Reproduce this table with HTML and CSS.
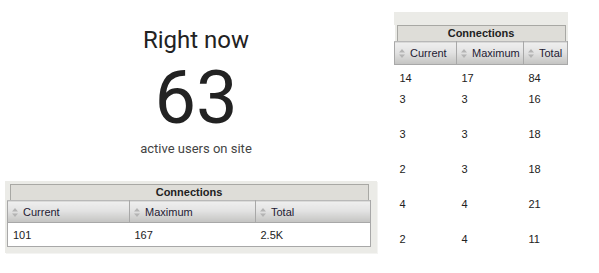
FILE: index.html
```html
<!DOCTYPE html>
<html lang="en">
<head>
    <meta charset="UTF-8">
    <meta name="viewport" content="width=device-width, initial-scale=1.0">
    <title>Realtime</title>
    <link rel="stylesheet" href="styles.css">
</head>
<body>
    <div class="dashboard">
        <div class="col-left">
            <div class="now">
                <h1>Right now</h1>
                <div class="now-count">63</div>
                <div class="now-label">active users on site</div>
            </div>

            <div class="grid-wrap grid-site">
                <table class="grid">
                    <colgroup>
                        <col style="width: 122px">
                        <col style="width: 126px">
                        <col>
                    </colgroup>
                    <thead>
                        <tr><th class="group" colspan="3"><div>Connections</div></th></tr>
                        <tr>
                            <th class="sort"><svg viewBox="0 0 6 9"><path d="M3 0L6 3.5H0Z M3 9L0 5.5H6Z"/></svg>Current</th>
                            <th class="sort"><svg viewBox="0 0 6 9"><path d="M3 0L6 3.5H0Z M3 9L0 5.5H6Z"/></svg>Maximum</th>
                            <th class="sort"><svg viewBox="0 0 6 9"><path d="M3 0L6 3.5H0Z M3 9L0 5.5H6Z"/></svg>Total</th>
                        </tr>
                    </thead>
                    <tbody>
                        <tr><td>101</td><td>167</td><td>2.5K</td></tr>
                    </tbody>
                </table>
            </div>
        </div>

        <div class="col-right">
            <div class="grid-wrap grid-pages">
                <table class="grid">
                    <colgroup>
                        <col style="width: 62px">
                        <col style="width: 67px">
                        <col>
                    </colgroup>
                    <thead>
                        <tr><th class="group" colspan="3"><div>Connections</div></th></tr>
                        <tr>
                            <th class="sort"><svg viewBox="0 0 6 9"><path d="M3 0L6 3.5H0Z M3 9L0 5.5H6Z"/></svg>Current</th>
                            <th class="sort"><svg viewBox="0 0 6 9"><path d="M3 0L6 3.5H0Z M3 9L0 5.5H6Z"/></svg>Maximum</th>
                            <th class="sort"><svg viewBox="0 0 6 9"><path d="M3 0L6 3.5H0Z M3 9L0 5.5H6Z"/></svg>Total</th>
                        </tr>
                    </thead>
                    <tbody>
                        <tr class="first"><td>14</td><td>17</td><td>84</td></tr>
                        <tr><td>3</td><td>3</td><td>16</td></tr>
                        <tr><td>3</td><td>3</td><td>18</td></tr>
                        <tr><td>2</td><td>3</td><td>18</td></tr>
                        <tr><td>4</td><td>4</td><td>21</td></tr>
                        <tr><td>2</td><td>4</td><td>11</td></tr>
                    </tbody>
                </table>
            </div>
        </div>
    </div>
</body>
</html>
```

FILE: styles.css
```css
body {
    margin: 0;
    padding: 0;
    background-color: #fff;
    font-family: "Liberation Sans", Arial, sans-serif;
    color: #222;
}
.dashboard {
    display: flex;
    align-items: flex-start;
}
.col-left {
    width: 392px;
}
.col-right {
    padding-left: 2px;
    padding-top: 12px;
}

/* big "right now" counter */
.now {
    font-family: Roboto, "Noto Sans", sans-serif;
    text-align: center;
    padding-top: 26px;
}
.now h1 {
    margin: 0;
    font-size: 24px;
    line-height: 28px;
    font-weight: 400;
    color: #222;
}
.now-count {
    margin-top: 7px;
    font-size: 74px;
    line-height: 74px;
    color: #222;
}
.now-label {
    margin-top: 6px;
    font-size: 13px;
    line-height: 16px;
    color: #444;
}

/* tablesorter-like grids */
.grid-site {
    width: 364px;
    margin: 24px 0 0 5px;
    padding: 3px 6px 6px 2px;
    background-color: #ebebe7;
    box-shadow: 1px 1px 0 #f4f4f2;
}
.grid-pages {
    width: 174px;
    border-top: 13px solid #ebebe7;
}
.grid {
    width: 100%;
    table-layout: fixed;
    border-collapse: collapse;
    font-size: 11px;
}
.grid th.group {
    padding: 0;
    border: none;
    background-color: #ebebe7;
}
.grid th.group div {
    margin: 0 2px;
    height: 15px;
    line-height: 15px;
    border: 1px solid #a8a8a4;
    border-bottom: none;
    background-color: #deddd8;
    font-weight: bold;
    text-align: center;
}
.grid th.sort {
    height: 21px;
    padding: 0 4px;
    border: 1px solid #a8a8a8;
    border-top-color: #b8b8b8;
    background: linear-gradient(#efefef, #e2e2e2 45%, #c3c3c1);
    font-weight: normal;
    text-align: left;
    white-space: nowrap;
    overflow: hidden;
    color: #1e1a33;
}
.grid th.sort svg {
    width: 6px;
    height: 9px;
    margin-right: 5px;
    vertical-align: -1px;
    fill: #b4b4b4;
}
.grid td {
    padding: 6px 5px 0;
    vertical-align: top;
    background-color: #fff;
}
.grid-site td {
    height: 17px;
    border-top: 1px solid #a8a8a8;
    border-bottom: 1px solid #a8a8a8;
}
.grid-site td:first-child {
    border-left: 1px solid #a8a8a8;
}
.grid-site td:last-child {
    border-right: 1px solid #a8a8a8;
}
.grid-pages th.sort {
    height: 22px;
}
.grid-pages td {
    height: 28px;
    padding-top: 7px;
}
.grid-pages tr.first td {
    height: 14px;
}
```
